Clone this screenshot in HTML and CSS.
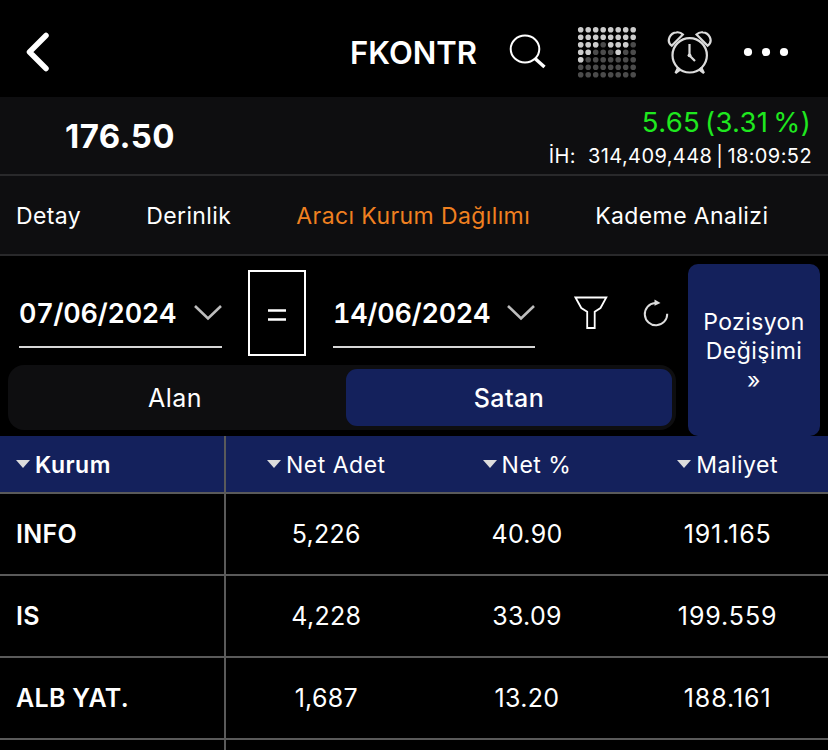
FILE: index.html
```html
<!DOCTYPE html>
<html lang="tr">
  <head>
    <meta charset="UTF-8" />
    <meta name="viewport" content="width=device-width, initial-scale=1" />
    <title>FKONTR</title>
    <link rel="stylesheet" href="styles.css" />
  </head>
  <body>
    <header class="topbar">
      <svg class="back" width="26" height="42" viewBox="0 0 26 42">
        <path d="M21 4.5 L4.5 21 L21 37.5" />
      </svg>
      <h1 class="title">FKONTR</h1>
      <svg class="search" width="38" height="36" viewBox="0 0 38 36">
        <ellipse cx="16" cy="15" rx="14.3" ry="13.4" />
        <path d="M26 24.5 L35.5 33" />
      </svg>
      <svg class="matrix" width="60" height="52" viewBox="0 0 60 52">
        <g class="dots-off">
          <path d="M3.7 18.7H57M3.7 26.2H57M3.7 33.7H57M3.7 41.2H57M3.7 48.7H57" />
        </g>
        <g class="dots-on">
          <path d="M3.7 3.7H57M3.7 11.2H57M3.7 18.7H19M33.7 18.7H49M3.7 26.2H12M41.2 26.2H42M3.7 33.7H4" />
        </g>
      </svg>
      <svg class="alarm" width="46" height="46" viewBox="0 0 46 46">
        <circle cx="22.7" cy="24.3" r="17.2" />
        <path d="M22.5 13V24.5L28 30" />
        <path d="M4.7 14.7C-1.5 10 3.5 1.5 9.5 1.3C12 1 14.5 2 15.9 3.5Z" />
        <path d="M40.7 14.7C46.9 10 41.9 1.5 35.9 1.3C33.4 1 30.9 2 29.5 3.5Z" />
        <path d="M11.3 36.2L8.5 42L13.5 38.3M34.1 36.2L36.9 42L31.9 38.3" />
        <circle class="pin" cx="22.5" cy="24.3" r="1.9" />
      </svg>
      <svg class="more" width="46" height="10" viewBox="0 0 46 10">
        <circle cx="5" cy="5" r="4.1" />
        <circle cx="23" cy="5" r="4.1" />
        <circle cx="41" cy="5" r="4.1" />
      </svg>
    </header>

    <section class="quote">
      <div class="price">176.50</div>
      <div class="quote-info">
        <div class="change">5.65 (3.31 %)</div>
        <div class="volume"><span>İH:</span><span>314,409,448 | 18:09:52</span></div>
      </div>
    </section>

    <nav class="tabs">
      <a class="tab">Detay</a>
      <a class="tab">Derinlik</a>
      <a class="tab active">Aracı Kurum Dağılımı</a>
      <a class="tab">Kademe Analizi</a>
    </nav>

    <section class="filters">
      <div class="filters-left">
        <div class="dates">
          <div class="date">
            <span>07/06/2024</span>
            <svg width="28" height="16" viewBox="0 0 28 16"><path d="M1 1 L14 13.5 L27 1" /></svg>
          </div>
          <button class="equal">
            <svg width="18" height="13" viewBox="0 0 18 13"><path d="M0 1.5H18M0 10.5H18" /></svg>
          </button>
          <div class="date end">
            <span>14/06/2024</span>
            <svg width="28" height="16" viewBox="0 0 28 16"><path d="M1 1 L14 13.5 L27 1" /></svg>
          </div>
          <svg class="funnel" width="34" height="34" viewBox="0 0 34 34">
            <path d="M1.5 1.5H32.3L26.5 12L20.7 15.8V32H13.2V15.8L7.3 12Z" />
          </svg>
          <svg class="refresh" width="28" height="28" viewBox="0 0 28 28">
            <path d="M25.2 14.7A11.2 11.2 0 1 1 13 3.9" />
            <path class="arrow" d="M12.5 0.5L18.5 4L12.5 6.8Z" />
          </svg>
        </div>
        <div class="switch">
          <button class="switch-item">Alan</button>
          <button class="switch-item selected">Satan</button>
        </div>
      </div>
      <button class="position">Pozisyon<br />Değişimi<br />»</button>
    </section>

    <main class="table">
      <div class="row head">
        <div class="cell name"><i class="sort"></i>Kurum</div>
        <div class="cell"><i class="sort"></i>Net Adet</div>
        <div class="cell"><i class="sort"></i>Net %</div>
        <div class="cell"><i class="sort"></i>Maliyet</div>
      </div>
      <div class="row">
        <div class="cell name">INFO</div>
        <div class="cell">5,226</div>
        <div class="cell">40.90</div>
        <div class="cell cost">191.165</div>
      </div>
      <div class="row">
        <div class="cell name">IS</div>
        <div class="cell">4,228</div>
        <div class="cell">33.09</div>
        <div class="cell cost">199.559</div>
      </div>
      <div class="row">
        <div class="cell name">ALB YAT.</div>
        <div class="cell">1,687</div>
        <div class="cell">13.20</div>
        <div class="cell cost">188.161</div>
      </div>
      <div class="row empty">
        <div class="cell name"></div>
      </div>
    </main>
  </body>
</html>
```
FILE: styles.css
```css
* {
  box-sizing: border-box;
}

body {
  margin: 0;
  height: 750px;
  background-color: #000;
  color: #fff;
  font-family: Inter, "Liberation Sans", sans-serif;
}

button {
  padding: 0;
  border: none;
  background: none;
  color: #fff;
  font-family: inherit;
  cursor: pointer;
}

svg {
  display: block;
  flex: none;
  fill: none;
  stroke: #fff;
}

/* top bar */
.topbar {
  display: flex;
  align-items: center;
  height: 97px;
  padding: 7px 39px 0 25px;
}

.back {
  stroke-width: 5.5;
  stroke-linecap: round;
  stroke-linejoin: round;
}

.title {
  margin: 2px 32px 0 auto;
  font-size: 31px;
  font-weight: 600;
  line-height: 40px;
}

.search {
  stroke-width: 2;
}

.search path {
  stroke-width: 3.4;
}

.matrix {
  margin-left: 30px;
  stroke-width: 5.6;
  stroke-linecap: round;
  stroke-dasharray: 0 7.5;
}

.dots-off {
  stroke: #4b4b4b;
}

.dots-on {
  stroke: #ccc;
}

.alarm {
  margin: 4px 0 0 30px;
  stroke: #dcdcdc;
  stroke-width: 2.2;
}

.alarm .pin {
  fill: #dcdcdc;
  stroke: none;
}

.more {
  margin-left: 30px;
  fill: #fff;
  stroke: none;
}

/* price */
.quote {
  display: flex;
  justify-content: space-between;
  height: 79px;
  padding: 0 16px 0 65px;
  background-color: #0e0e10;
  border-bottom: 2px solid #29292b;
}

.price {
  font-size: 33px;
  font-weight: 700;
  line-height: 79px;
  letter-spacing: 0.4px;
}

.quote-info {
  text-align: right;
}

.change {
  margin-top: 8px;
  padding-right: 1px;
  color: #1fe81f;
  font-size: 27.5px;
  line-height: 34px;
  word-spacing: -3px;
  letter-spacing: 0.3px;
}

.volume {
  display: flex;
  justify-content: flex-end;
  gap: 12px;
  font-size: 20px;
  line-height: 35px;
  word-spacing: -2px;
  letter-spacing: 0.4px;
}

/* tabs */
.tabs {
  display: flex;
  gap: 65px;
  height: 80px;
  padding-left: 16px;
  background-color: #0e0e10;
  border-bottom: 2px solid #29292b;
}

.tab {
  font-size: 23px;
  line-height: 81px;
  letter-spacing: 0.4px;
  white-space: nowrap;
}

.tab.active {
  color: #f08020;
}

/* filters */
.filters {
  display: flex;
  justify-content: space-between;
  height: 180px;
  padding: 8px 8px 0;
}

.filters-left {
  width: 668px;
}

.dates {
  display: flex;
  height: 101px;
  padding: 6px 0 0 11px;
}

.date {
  display: flex;
  align-items: center;
  justify-content: space-between;
  width: 203px;
  height: 78px;
  padding-top: 9px;
  border-bottom: 2px solid #d6d6d6;
  font-size: 27px;
  font-weight: 600;
  font-variant-numeric: tabular-nums;
  letter-spacing: -0.3px;
}

.date span {
  padding-top: 1px;
}

.date.end {
  width: 202px;
}

.date svg {
  stroke: #bdbdbd;
  stroke-width: 2.6;
}

.equal {
  display: flex;
  align-items: center;
  justify-content: center;
  width: 58px;
  height: 86px;
  margin: 0 27px 0 26px;
  padding-top: 5px;
  border: 2px solid #fff;
}

.equal svg {
  stroke-width: 2.6;
}

.funnel {
  margin: 26px 0 0 39px;
  stroke-width: 1.8;
}

.refresh {
  margin: 29px 0 0 34px;
  stroke: #ddd;
  stroke-width: 2;
}

.refresh .arrow {
  fill: #ddd;
  stroke: none;
}

.switch {
  display: flex;
  height: 65px;
  padding: 4px;
  gap: 8px;
  border-radius: 16px;
  background-color: #0e0e10;
}

.switch-item {
  flex: 1;
  height: 57px;
  border-radius: 11px;
  font-size: 25px;
  letter-spacing: 0.5px;
}

.switch-item.selected {
  background-color: #14215c;
  font-weight: 500;
}

.position {
  width: 132px;
  height: 172px;
  padding-top: 2px;
  border-radius: 10px;
  background-color: #14215c;
  font-size: 23px;
  line-height: 29px;
  letter-spacing: 0.4px;
}

/* table */
.row {
  display: grid;
  grid-template-columns: 226px repeat(3, 1fr);
  height: 82px;
  border-bottom: 2px solid #5a5a5a;
}

.row.empty {
  height: 10px;
  border-bottom: none;
}

.cell {
  display: flex;
  align-items: center;
  justify-content: center;
  font-size: 25px;
  letter-spacing: 0.3px;
}

.cell.cost {
  letter-spacing: 0.9px;
}

.cell.name {
  justify-content: flex-start;
  padding-left: 16px;
  border-right: 2px solid #5a5a5a;
  font-weight: 600;
}

.row.head {
  height: 58px;
  background-color: #14215c;
}

.row.head .cell {
  padding-top: 2px;
  font-size: 23px;
  letter-spacing: 0.5px;
}

.sort {
  margin: -2px 5px 0 0;
  border: 7px solid transparent;
  border-top: 8px solid #ddd;
  border-bottom: 0;
}
```
